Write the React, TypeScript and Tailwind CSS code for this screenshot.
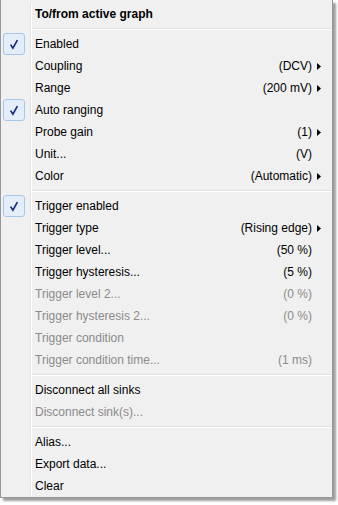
import React from 'react';

type Item =
  | { kind: 'header'; label: string }
  | { kind: 'sep' }
  | {
      kind: 'item';
      label: string;
      value?: string;
      checked?: boolean;
      submenu?: boolean;
      disabled?: boolean;
    };

const ITEMS: Item[] = [
  { kind: 'header', label: 'To/from active graph' },
  { kind: 'sep' },
  { kind: 'item', label: 'Enabled', checked: true },
  { kind: 'item', label: 'Coupling', value: '(DCV)', submenu: true },
  { kind: 'item', label: 'Range', value: '(200 mV)', submenu: true },
  { kind: 'item', label: 'Auto ranging', checked: true },
  { kind: 'item', label: 'Probe gain', value: '(1)', submenu: true },
  { kind: 'item', label: 'Unit...', value: '(V)' },
  { kind: 'item', label: 'Color', value: '(Automatic)', submenu: true },
  { kind: 'sep' },
  { kind: 'item', label: 'Trigger enabled', checked: true },
  { kind: 'item', label: 'Trigger type', value: '(Rising edge)', submenu: true },
  { kind: 'item', label: 'Trigger level...', value: '(50 %)' },
  { kind: 'item', label: 'Trigger hysteresis...', value: '(5 %)' },
  { kind: 'item', label: 'Trigger level 2...', value: '(0 %)', disabled: true },
  { kind: 'item', label: 'Trigger hysteresis 2...', value: '(0 %)', disabled: true },
  { kind: 'item', label: 'Trigger condition', disabled: true },
  { kind: 'item', label: 'Trigger condition time...', value: '(1 ms)', disabled: true },
  { kind: 'sep' },
  { kind: 'item', label: 'Disconnect all sinks' },
  { kind: 'item', label: 'Disconnect sink(s)...', disabled: true },
  { kind: 'sep' },
  { kind: 'item', label: 'Alias...' },
  { kind: 'item', label: 'Export data...' },
  { kind: 'item', label: 'Clear' },
];

function CheckBox() {
  return (
    <div className="ml-[2px] flex h-[22px] w-[22px] items-center justify-center rounded-[3px] border border-[#a8c6ec] bg-[#e4edfa]">
      <svg width="10" height="11" viewBox="0 0 10 11">
        <path d="M1.6 5.6 L3.9 9.2 L8.4 1.2" fill="none" stroke="#1a2d7c" strokeWidth="1.7" strokeLinejoin="miter" />
      </svg>
    </div>
  );
}

function Gutter({ children }: { children?: React.ReactNode }) {
  return (
    <div className="flex w-[30px] shrink-0 items-center border-r border-[#e2e3e3]">
      {children}
    </div>
  );
}

function Row({ item }: { item: Item }) {
  if (item.kind === 'sep') {
    return (
      <div className="flex h-[8px]">
        <Gutter />
        <div className="flex flex-1 flex-col justify-center border-l border-white">
          <div className="h-px bg-[#e0e0e0]" />
          <div className="h-px bg-white" />
        </div>
      </div>
    );
  }

  if (item.kind === 'header') {
    return (
      <div className="flex h-[22px]">
        <Gutter />
        <div className="flex flex-1 items-center border-l border-white pl-[3px] font-bold text-black">
          {item.label}
        </div>
      </div>
    );
  }

  const color = item.disabled ? 'text-[#8b8b8b]' : 'text-black';
  return (
    <div className="flex h-[22px]">
      <Gutter>{item.checked && <CheckBox />}</Gutter>
      <div className={`flex flex-1 items-center border-l border-white pl-[3px] ${color}`}>
        <span className="flex-1 whitespace-nowrap">{item.label}</span>
        {item.value && <span className="whitespace-nowrap">{item.value}</span>}
        <span className="flex w-[20px] items-center pl-[5px]">
          {item.submenu && (
            <svg width="4" height="7" viewBox="0 0 4 7">
              <path d="M0 0 L4 3.5 L0 7 Z" fill="#000" />
            </svg>
          )}
        </span>
      </div>
    </div>
  );
}

export default function App() {
  return (
    <div className="min-h-[505px] bg-white">
      <div
        className="w-[333px] border-x border-b border-[#979797] bg-[#f0f0f0] pt-[3px] text-[12px] leading-none shadow-[3px_3px_2px_rgba(0,0,0,0.38)]"
        style={{ fontFamily: '"Segoe UI", "Liberation Sans", Arial, sans-serif' }}
      >
        {ITEMS.map((item, i) => (
          <Row key={i} item={item} />
        ))}
      </div>
    </div>
  );
}
